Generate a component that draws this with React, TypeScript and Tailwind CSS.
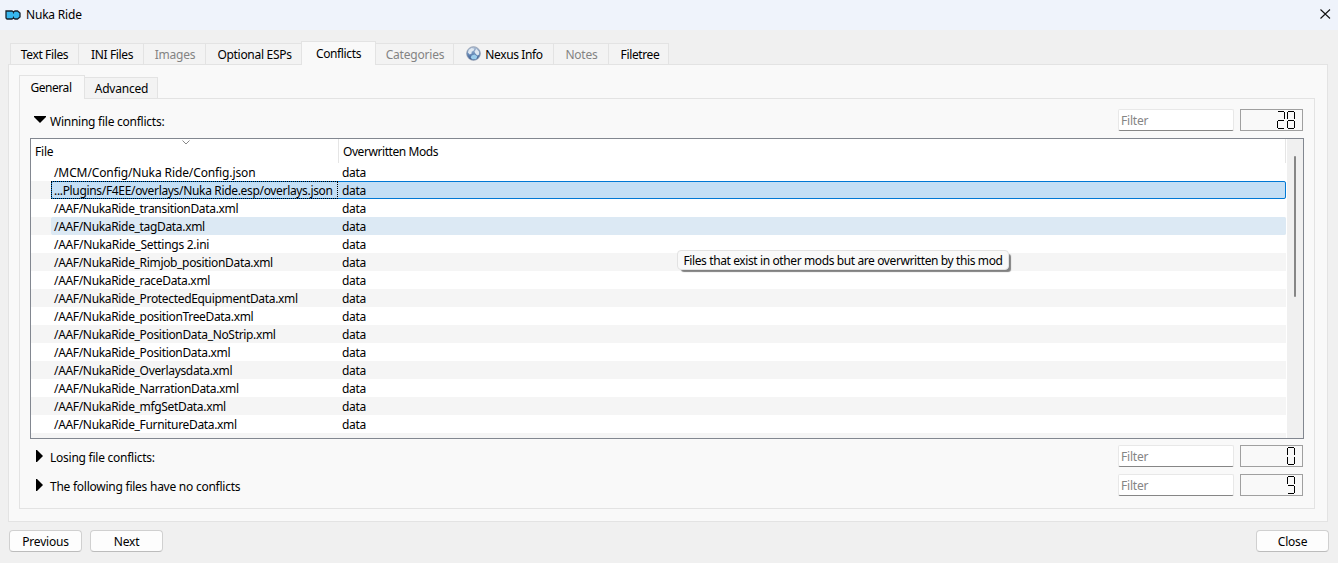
import { clsx } from 'clsx';

const tabs = [
  { label: 'Text Files', className: 'w-[69px]' },
  { label: 'INI Files', className: 'w-[66px] pl-[2px]' },
  { label: 'Images', className: 'w-[63px] pl-px', disabled: true },
  { label: 'Optional ESPs', className: 'w-[97px] pl-[2px] tracking-[-0.3px]' },
  { label: 'Conflicts', className: 'w-[75px]', active: true },
  { label: 'Categories', className: 'w-[79px] pl-px', disabled: true },
  { label: 'Nexus Info', className: 'w-[101px] pl-[2px]', globe: true },
  { label: 'Notes', className: 'w-[56px] pl-px', disabled: true },
  { label: 'Filetree', className: 'w-[61px] pl-[3px]' },
];

const files = [
  { name: '/MCM/Config/Nuka Ride/Config.json', className: 'tracking-[-0.11px]' },
  { name: '...Plugins/F4EE/overlays/Nuka Ride.esp/overlays.json' },
  { name: '/AAF/NukaRide_transitionData.xml' },
  { name: '/AAF/NukaRide_tagData.xml' },
  { name: '/AAF/NukaRide_Settings 2.ini', className: 'tracking-[-0.27px]' },
  { name: '/AAF/NukaRide_Rimjob_positionData.xml' },
  { name: '/AAF/NukaRide_raceData.xml' },
  { name: '/AAF/NukaRide_ProtectedEquipmentData.xml' },
  { name: '/AAF/NukaRide_positionTreeData.xml' },
  { name: '/AAF/NukaRide_PositionData_NoStrip.xml' },
  { name: '/AAF/NukaRide_PositionData.xml' },
  { name: '/AAF/NukaRide_Overlaysdata.xml' },
  { name: '/AAF/NukaRide_NarrationData.xml' },
  { name: '/AAF/NukaRide_mfgSetData.xml' },
  { name: '/AAF/NukaRide_FurnitureData.xml' },
];

const selectedRow = 1;
const hoveredRow = 3;

// Segments lit for each digit: a top, b/c right, d bottom, e/f left, g middle
const digitSegments: Record<string, string> = {
  '0': 'abcdef',
  '2': 'abged',
  '8': 'abcdefg',
  '9': 'abcfgd',
};

const segmentPaths: Record<string, string> = {
  a: 'M1 .5h6',
  b: 'M7.5 1v7',
  c: 'M7.5 10v7',
  d: 'M1 17.5h6',
  e: 'M.5 10v7',
  f: 'M.5 1v7',
  g: 'M1 9.5h6',
};

function Lcd({ value }: { value: string }) {
  return (
    <div className="flex h-[22px] w-[63px] justify-end gap-[2px] border border-[#a0a0a0] pt-px pr-[7px]">
      {value.split('').map((digit, i) => (
        <svg key={i} width="8" height="18" className="shrink-0" shapeRendering="crispEdges">
          {digitSegments[digit].split('').map((s) => (
            <path key={s} d={segmentPaths[s]} stroke="#000" fill="none" />
          ))}
        </svg>
      ))}
    </div>
  );
}

function Globe() {
  return (
    <svg width="15" height="15" viewBox="0 0 16 16" className="mr-[4px] -mt-[3px] shrink-0">
      <defs>
        <linearGradient id="globe" x1="0" y1="0" x2="0" y2="1">
          <stop offset="0" stopColor="#b4c2d6" />
          <stop offset=".5" stopColor="#6d90bc" />
          <stop offset="1" stopColor="#36558c" />
        </linearGradient>
      </defs>
      <circle cx="8" cy="8" r="7.300" fill="url(#globe)" stroke="#8793a8" strokeWidth=".8" />
      <path d="M2 7l1-3 3-2 3 1-1 2-2 1v2l-2 1zM9 6l2-3 3 3v3l-2 1-2-2z" fill="#dfe8f1" />
      <path d="M6 10l3-1 3 2-1 3-4 .5-2-2z" fill="#9bcdec" />
    </svg>
  );
}

function ConflictHeader({ label, count, open }: { label: string; count: string; open?: boolean }) {
  return (
    <div className="flex h-[22px] items-center">
      <svg width="20" height="22" className="shrink-0">
        {open ? <path d="M4 7h12v1l-6 6-6-6z" /> : <path d="M6 5h1l6 6-6 6H6z" />}
      </svg>
      <span className="grow pt-[3px] tracking-[-0.25px]">{label}</span>
      <input
        placeholder="Filter"
        className="mr-[6px] h-[22px] w-[116px] rounded-[2px] border border-[#e8e8e8] border-b-[#868686] bg-white pl-[2px] placeholder:text-[#858585]"
      />
      <Lcd value={count} />
    </div>
  );
}

function Button({ children }: { children: string }) {
  return (
    <button className="h-[22px] w-[73px] rounded-[4px] border border-[#d0d0d0] border-b-[#bcbcbc] bg-[#fdfdfd] pt-[2px] leading-[18px]">
      {children}
    </button>
  );
}

export default function App() {
  return (
    <div className="flex h-[563px] w-[1338px] flex-col overflow-hidden bg-[#f0f0f0] font-['Noto_Sans','Open_Sans',sans-serif] text-[12px] leading-[16px] tracking-[-0.2px] text-black">
      {/* Title bar */}
      <header className="flex h-[30px] shrink-0 items-center bg-[#eff3fb] pl-[5px] pr-[7px]">
        <svg width="16" height="10" viewBox="0 0 16 10" className="shrink-0">
          <path
            d="M1 1h6l1.500 1L10 1h2.500L15 3v4l-2.500 2H10L8.500 8 7 9H2L1 8z"
            fill="#36b6ee"
            stroke="#16222e"
            strokeWidth="1.300"
          />
          <path d="M8.500 2v1.500M8.500 8V6.500" stroke="#16222e" />
        </svg>
        <span className="ml-[5px] grow">Nuka Ride</span>
        <svg width="11" height="10" viewBox="0 0 11 10" className="-mt-[2px]">
          <path d="M.5.5l9.500 9M10 .5l-9.500 9" stroke="#111" strokeWidth="1.100" />
        </svg>
      </header>

      {/* Tabs */}
      <nav className="mt-[11px] flex h-[23px] shrink-0 items-end pl-[10px] tracking-[-0.36px]">
        {tabs.map((tab) => (
          <div
            key={tab.label}
            className={clsx(
              'flex shrink-0 items-center justify-center border border-b-0 border-[#e3e3e3] whitespace-nowrap',
              tab.className,
              tab.active ? 'relative z-10 -mb-px h-[24px] bg-[#f9f9f9]' : 'h-[21px] bg-[#f3f3f3] pt-px',
              tab.label !== 'Text Files' && '-ml-px',
              tab.disabled && 'tracking-[-0.2px] text-[#838383]',
            )}
          >
            {tab.globe && <Globe />}
            {tab.label}
          </div>
        ))}
      </nav>

      <main className="ml-[8px] h-[458px] w-[1320px] shrink-0 border border-[#e3e3e3] bg-[#f9f9f9] pt-[10px] pl-[10px]">
        <nav className="flex h-[23px] items-end">
          <div className="relative z-10 -mb-px flex h-[24px] w-[66px] items-center justify-center border border-b-0 border-[#e3e3e3] bg-[#f9f9f9] pt-px pr-[2px] tracking-[-0.45px]">
            General
          </div>
          <div className="-ml-px flex h-[21px] w-[74px] items-center justify-center border border-b-0 border-[#e3e3e3] bg-[#f3f3f3] pt-[2px] pl-px">
            Advanced
          </div>
        </nav>

        <section className="h-[411px] w-[1296px] border border-[#e3e3e3] pt-[10px] pl-[10px]">
          <div className="flex w-[1273px] flex-col">
            <ConflictHeader label="Winning file conflicts:" count="28" open />

            {/* Conflict list */}
            <div className="relative mt-[7px] mb-[6px] flex h-[301px] w-[1274px] border border-[#828790] bg-white">
              <div className="w-[1255px] shrink-0 overflow-hidden">
                <div className="flex h-[24px] items-center border-r border-[#e5e5e5]">
                  <div className="relative flex h-full w-[308px] items-center border-r border-[#e5e5e5] pl-1 pt-[2px]">
                    File
                    <svg width="8" height="5" className="absolute top-[1px] left-[151px]">
                      <path d="M.5.5L4 4 7.500.5" fill="none" stroke="#888" />
                    </svg>
                  </div>
                  <div className="pl-1 pt-[2px] tracking-[-0.43px]">Overwritten Mods</div>
                </div>
                {files.map((file, i) => (
                  <div key={file.name} className={clsx('flex h-[18px] pl-5', i % 2 === 1 && 'bg-[#f5f5f5]')}>
                    <div
                      className={clsx(
                        'flex grow rounded-[2px] border',
                        i === selectedRow && 'border-[#0078d4] bg-[#c4dff5]',
                        i === hoveredRow && 'border-[#dce9f4] bg-[#dce9f4]',
                        i !== selectedRow && i !== hoveredRow && 'border-transparent',
                      )}
                    >
                      <div
                        className={clsx(
                          '-my-px -ml-px w-[287px] shrink-0 border pt-px pl-[2px] whitespace-nowrap',
                          i === selectedRow ? 'border-dotted border-black' : 'border-transparent',
                          file.className ?? 'tracking-[-0.33px]',
                        )}
                      >
                        {file.name}
                      </div>
                      <div className="pl-[4px] pt-px tracking-[-0.35px]">data</div>
                    </div>
                  </div>
                ))}
                <div className="h-[5px] bg-[#f5f5f5]" />
              </div>
              <div className="ml-px grow bg-[#f0f0f0] pt-[17px] pl-[7px]">
                <div className="h-[141px] w-[2px] rounded bg-[#868686]" />
              </div>
              <div className="absolute top-[111px] left-[646px] flex h-[20px] w-[332px] items-center justify-center rounded-[4px] border border-[#e2e2e2] bg-[#f9f9f9] pt-px tracking-[-0.39px] whitespace-nowrap shadow-[3px_3px_1px_-1px_#808080]">
                Files that exist in other mods but are overwritten by this mod
              </div>
            </div>

            <div className="flex flex-col gap-[7px]">
              <ConflictHeader label="Losing file conflicts:" count="0" />
              <ConflictHeader label="The following files have no conflicts" count="9" />
            </div>
          </div>
        </section>
      </main>

      <footer className="mt-[8px] flex gap-2 pl-[9px] pr-[9px]">
        <Button>Previous</Button>
        <Button>Next</Button>
        <div className="ml-auto">
          <Button>Close</Button>
        </div>
      </footer>
    </div>
  );
}
